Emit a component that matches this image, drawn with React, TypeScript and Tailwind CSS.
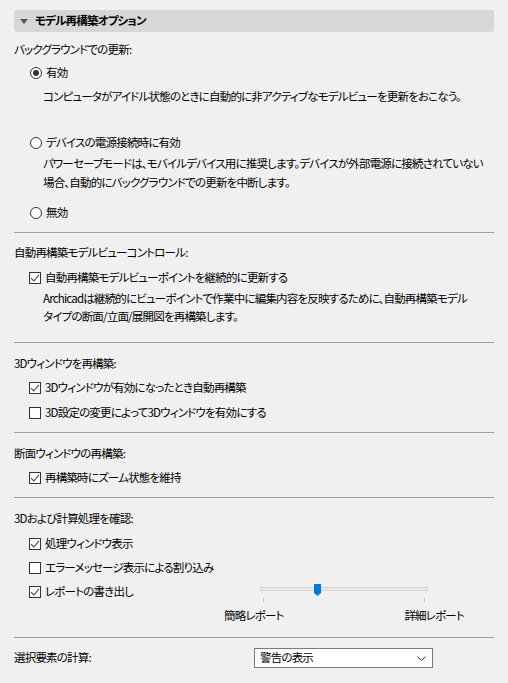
import React from "react";

function Radio({ checked }: { checked?: boolean }) {
  return (
    <span className="w-[12px] h-[12px] rounded-full border border-[#333333] bg-white flex items-center justify-center shrink-0">
      {checked && <span className="w-[6px] h-[6px] rounded-full bg-[#333333]" />}
    </span>
  );
}

function Check({ checked }: { checked?: boolean }) {
  return (
    <span className="w-[12px] h-[12px] border border-[#333333] bg-white flex items-center justify-center shrink-0">
      {checked && (
        <svg width="10" height="10" viewBox="0 0 10 10">
          <path d="M1 5.2 L3.8 8 L9 1.8" fill="none" stroke="#444444" strokeWidth="1.1" />
        </svg>
      )}
    </span>
  );
}

function Sep({ className }: { className: string }) {
  return <div className={"h-px bg-[#a0a0a0] " + className} />;
}

export default function App() {
  return (
    <div
      className="w-[508px] h-[683px] bg-[#f0f0f0] px-[14px] pt-[10px] text-[11.5px] tracking-[-0.07em] whitespace-nowrap text-black overflow-hidden [font-feature-settings:'palt']"
      style={{ fontFamily: '"Noto Sans CJK JP", "Noto Sans", sans-serif' }}
    >
      <div className="h-[22px] rounded-[3px] bg-[#d7d7d7] flex items-center pl-[6px] gap-[7px]">
        <svg width="8" height="5" viewBox="0 0 8 5">
          <path d="M0 0 H8 L4 5 Z" fill="#555555" />
        </svg>
        <span className="font-bold">モデル再構築オプション</span>
      </div>

      <div className="h-[20px] mt-[8px] flex items-center">バックグラウンドでの更新:</div>
      <div className="h-[20px] mt-[3px] flex items-center gap-[4px] pl-[16px]">
        <Radio checked />
        <span>有効</span>
      </div>
      <div className="h-[20px] mt-[4px] flex items-center pl-[29px]">
        コンピュータがアイドル状態のときに自動的に非アクティブなモデルビューを更新をおこなう。
      </div>
      <div className="h-[20px] mt-[26px] flex items-center gap-[4px] pl-[16px]">
        <Radio />
        <span>デバイスの電源接続時に有効</span>
      </div>
      <div className="mt-[1px] pl-[29px] leading-[19px]">
        <div>パワーセーブモードは、モバイルデバイス用に推奨します。デバイスが外部電源に接続されていない</div>
        <div>場合、自動的にバックグラウンドでの更新を中断します。</div>
      </div>
      <div className="h-[20px] mt-[11px] flex items-center gap-[4px] pl-[16px]">
        <Radio />
        <span>無効</span>
      </div>
      <Sep className="mt-[9px]" />

      <div className="h-[20px] mt-[10px] flex items-center">自動再構築モデルビューコントロール:</div>
      <div className="h-[20px] mt-[5px] flex items-center gap-[4px] pl-[15px]">
        <Check checked />
        <span>自動再構築モデルビューポイントを継続的に更新する</span>
      </div>
      <div className="mt-[1px] pl-[29px] leading-[18px]">
        <div>Archicadは継続的にビューポイントで作業中に編集内容を反映するために、自動再構築モデル</div>
        <div>タイプの断面/立面/展開図を再構築します。</div>
      </div>
      <Sep className="mt-[17px]" />

      <div className="h-[20px] mt-[11px] flex items-center">3Dウィンドウを再構築:</div>
      <div className="h-[20px] mt-[4px] flex items-center gap-[4px] pl-[15px]">
        <Check checked />
        <span>3Dウィンドウが有効になったとき自動再構築</span>
      </div>
      <div className="h-[20px] mt-[5px] flex items-center gap-[4px] pl-[15px]">
        <Check />
        <span>3D設定の変更によって3Dウィンドウを有効にする</span>
      </div>
      <Sep className="mt-[9px]" />

      <div className="h-[20px] mt-[11px] flex items-center">断面ウィンドウの再構築:</div>
      <div className="h-[20px] mt-[4px] flex items-center gap-[4px] pl-[15px]">
        <Check checked />
        <span>再構築時にズーム状態を維持</span>
      </div>
      <Sep className="mt-[9px]" />

      <div className="h-[20px] mt-[11px] flex items-center">3Dおよび計算処理を確認:</div>
      <div className="h-[20px] mt-[5px] flex items-center gap-[4px] pl-[15px]">
        <Check checked />
        <span>処理ウィンドウ表示</span>
      </div>
      <div className="h-[20px] mt-[4px] flex items-center gap-[4px] pl-[15px]">
        <Check />
        <span>エラーメッセージ表示による割り込み</span>
      </div>
      <div className="mt-[4px] flex items-start">
        <div className="h-[20px] flex items-center gap-[4px] pl-[15px]">
          <Check checked />
          <span>レポートの書き出し</span>
        </div>
        <div className="ml-auto mr-[30px] w-[240px]">
          <div className="relative h-[20px]">
            <div className="absolute left-[36px] top-[5px] w-[168px] h-[4px] bg-[#e7e7e7] border border-[#d6d6d6]" />
            <svg className="absolute left-[90px] top-[2px]" width="7" height="12" viewBox="0 0 7 12">
              <path d="M0 0 H7 V9 L3.5 12 L0 9 Z" fill="#0078d7" />
            </svg>
            <div className="absolute left-[39px] top-[16px] w-px h-[4px] bg-[#c4c4c4]" />
            <div className="absolute left-[200px] top-[16px] w-px h-[4px] bg-[#c4c4c4]" />
          </div>
          <div className="h-[20px] mt-[4px] flex items-center justify-between">
            <span>簡略レポート</span>
            <span>詳細レポート</span>
          </div>
        </div>
      </div>
      <Sep className="mt-[11px]" />

      <div className="h-[20px] mt-[10px] flex items-center">
        <span>選択要素の計算:</span>
        <div className="ml-auto mr-[61px] w-[179px] h-[20px] border border-[#7a7a7a] bg-white flex items-center pl-[5px] pr-[6px]">
          <span>警告の表示</span>
          <svg className="ml-auto" width="9" height="5" viewBox="0 0 9 5">
            <path d="M0.5 0.5 L4.5 4.5 L8.5 0.5" fill="none" stroke="#333333" strokeWidth="1" />
          </svg>
        </div>
      </div>
    </div>
  );
}
